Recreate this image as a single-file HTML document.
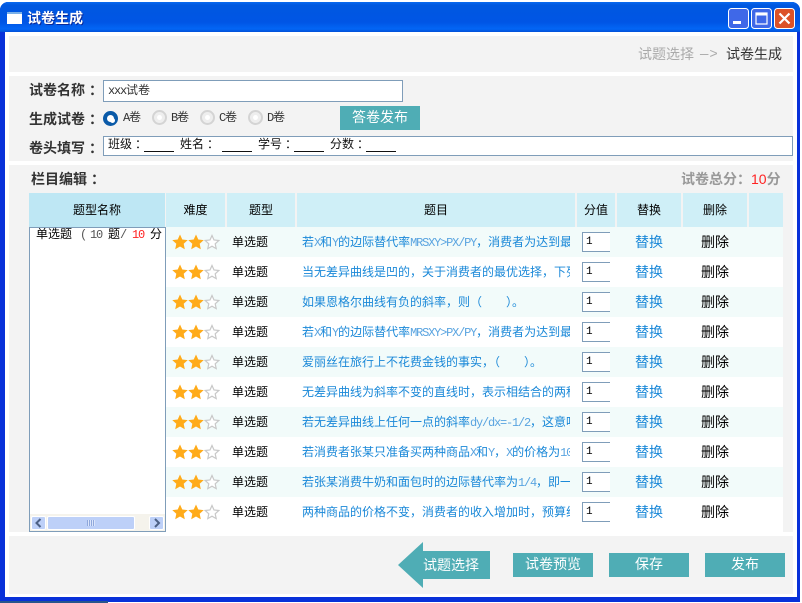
<!DOCTYPE html>
<html lang="zh"><head><meta charset="utf-8"><style>
html,body{margin:0;padding:0;background:#fff}
body{width:802px;height:603px;position:relative;overflow:hidden;font-family:"Liberation Mono","WenQuanYi Zen Hei","Noto Sans CJK SC",monospace;font-size:12px;color:#000}
.a{position:absolute;white-space:nowrap}
.p{position:absolute;background:#f3f3f3}
.in{position:absolute;background:#fff;border:1px solid #7f9db9;box-sizing:border-box}
.in span{position:absolute;top:0;white-space:nowrap}
.in i{position:absolute;top:14px;height:1px;background:#111}
.lb{position:absolute;left:29px;font-size:14px;font-weight:bold;color:#333;line-height:20px;white-space:nowrap;font-family:"WenQuanYi Zen Hei","Noto Sans CJK SC",sans-serif}
.lb s{text-decoration:none;position:relative;left:4px}
.btn{position:absolute;background:#4fadb5;color:#fff;font-size:14px;text-align:center;line-height:27px;height:24px;width:80px;overflow:hidden}
.h{position:absolute;top:193px;height:34px;line-height:36px;background:#cfeff7;text-align:center}
.r{position:absolute;left:166px;width:617px;height:30px}
.r.o{background:#f2fbfa}
.r>*{position:absolute}
.st{left:6px;top:7px}
.ty{left:66px;top:0;line-height:32px}
.q{left:136px;top:0;width:268px;overflow:hidden;white-space:nowrap;line-height:33px;color:#1a88d8}
.q b{font-weight:normal;color:#5aa4e0;letter-spacing:-1.2px}
.n{left:416px;top:5px;width:28px;height:20px;box-sizing:border-box;border:1px solid #7f9db9;border-right:0;background:#fff;line-height:19px;padding-left:3px;font-size:11px}
.rp{left:469px;top:0;font-size:14px;line-height:35px;color:#1a88d8}
.dl{left:535px;top:0;font-size:14px;line-height:35px}
.rd{position:absolute;top:110px;width:15px;height:15px;border-radius:50%;box-sizing:border-box;border:2px solid #d4d4d4;background:#eee}
.rd:after{content:"";position:absolute;left:3px;top:3px;width:5px;height:5px;border-radius:50%;background:#fff;border:0}
.rl{position:absolute;top:110px;line-height:17px;color:#333;letter-spacing:-1.2px}
</style></head><body>
<svg width="0" height="0" style="position:absolute"><defs>
<symbol id="s" viewBox="0 0 48 16">
<path d="M8 0.5l2.3 5 5.4.6-4 3.7 1.1 5.4L8 12.5l-4.8 2.7 1.1-5.4-4-3.7 5.4-.6z" fill="#ffab19"/>
<path d="M24 0.5l2.3 5 5.4.6-4 3.7 1.1 5.4-4.8-2.7-4.8 2.7 1.1-5.4-4-3.7 5.4-.6z" fill="#ffab19"/>
<path d="M40 1.5l2 4.5 4.8.5-3.6 3.3 1 4.8-4.2-2.4-4.2 2.4 1-4.8-3.6-3.3 4.8-.5z" fill="#fff" stroke="#c8c8c8" stroke-width="1.2"/>
</symbol></defs></svg>

<div class="a" style="left:0;top:2px;width:800px;height:600px;border-radius:8px 8px 0 0;background:#0831d9"></div>
<div class="a" style="left:0;top:2px;width:800px;height:30px;border-radius:8px 8px 0 0;background:linear-gradient(#0a6af0 0,#0058e0 3px,#0055e5 20px,#0266f5 27px,#0250d8 30px)"></div>
<div class="a" style="left:5px;top:32px;width:792px;height:565px;background:#fff"></div>
<div class="a" style="left:0;top:601px;width:108px;height:2px;background:#28558c"></div>

<div class="a" style="left:7px;top:12px;width:15px;height:12px;background:#fff;border-top:2px solid #7ab0e8;box-sizing:border-box"></div>
<div class="a" style="left:27px;top:9px;color:#fff;font-size:14px;font-weight:bold;line-height:18px;text-shadow:1px 1px 0 #0a2a9a;font-family:'WenQuanYi Zen Hei','Noto Sans CJK SC',sans-serif">试卷生成</div>
<svg class="a" style="left:728px;top:8px" width="68" height="22" viewBox="0 0 68 22">
<rect x=".5" y=".5" width="20" height="20" rx="3" fill="#3f68e8" stroke="#fff"/>
<rect x="5" y="13" width="8" height="3" fill="#fff"/>
<rect x="23.5" y=".5" width="20" height="20" rx="3" fill="#3f68e8" stroke="#fff"/>
<rect x="28" y="5" width="11" height="11" fill="none" stroke="#fff" stroke-width="1.2"/><rect x="28" y="5" width="11" height="2.5" fill="#fff"/>
<rect x="46.5" y=".5" width="20" height="20" rx="3" fill="#dc5228" stroke="#fff"/>
<path d="M51.5 5.5l10 10M61.5 5.5l-10 10" stroke="#fff" stroke-width="2.2"/>
</svg>

<div class="p" style="left:9px;top:36px;width:784px;height:36px"></div>
<div class="a" style="left:638px;top:47px;font-size:14px;line-height:18px;color:#aaa">试题选择</div>
<div class="a" style="left:700px;top:46px;font-size:14px;line-height:18px;color:#aaa;letter-spacing:1px">—&gt;</div>
<div class="a" style="left:726px;top:47px;font-size:14px;line-height:18px;color:#333">试卷生成</div>

<div class="p" style="left:9px;top:76px;width:784px;height:85px"></div>
<div class="lb" style="top:80px">试卷名称<s>：</s></div>
<div class="in" style="left:103px;top:80px;width:300px;height:22px;line-height:20px;color:#333"><span style="left:4px"><span style="position:static;letter-spacing:-1.2px">xxx</span>试卷</span></div>
<div class="lb" style="top:109px">生成试卷<s>：</s></div>
<div class="rd" style="left:103px;border:4px solid #0a5aa8;background:#fff;top:111px"></div>
<div class="rl" style="left:123px">A卷</div>
<div class="rd" style="left:152px"></div><div class="rl" style="left:171px">B卷</div>
<div class="rd" style="left:200px"></div><div class="rl" style="left:219px">C卷</div>
<div class="rd" style="left:248px"></div><div class="rl" style="left:267px">D卷</div>
<div class="btn" style="left:340px;top:106px">答卷发布</div>
<div class="lb" style="top:138px">卷头填写<s>：</s></div>
<div class="in" style="left:103px;top:136px;width:690px;height:20px;line-height:15px;color:#111">
<span style="left:4px;top:1px">班级</span><span style="left:31px;top:1px">：</span><i style="left:40px;width:30px"></i>
<span style="left:76px;top:1px">姓名</span><span style="left:103px;top:1px">：</span><i style="left:118px;width:30px"></i>
<span style="left:154px;top:1px">学号</span><span style="left:181px;top:1px">：</span><i style="left:190px;width:30px"></i>
<span style="left:226px;top:1px">分数</span><span style="left:253px;top:1px">：</span><i style="left:262px;width:30px"></i>
</div>

<div class="p" style="left:9px;top:165px;width:784px;height:367px"></div>
<div class="lb" style="left:31px;top:169px">栏目编辑<s>：</s></div>
<div class="a" style="left:681px;top:170px;font-size:14px;line-height:18px;color:#999;font-weight:bold;font-family:'WenQuanYi Zen Hei','Noto Sans CJK SC',sans-serif">试卷总分：<span style="color:#f22;font-weight:normal;font-family:'Liberation Sans'">10</span>分</div>

<div class="h" style="left:29px;width:136px;background:#bee7f4">题型名称</div>
<div class="h" style="left:166px;width:59px">难度</div>
<div class="h" style="left:227px;width:68px">题型</div>
<div class="h" style="left:297px;width:278px">题目</div>
<div class="h" style="left:577px;width:38px">分值</div>
<div class="h" style="left:617px;width:64px">替换</div>
<div class="h" style="left:683px;width:64px">删除</div>
<div class="h" style="left:749px;width:34px"></div>

<div class="in" style="left:29px;top:227px;width:137px;height:305px"></div>
<div class="a" style="left:36px;top:228px;line-height:15px">单选题</div>
<div class="a" style="left:80px;top:228px;line-height:15px;color:#555">(</div>
<div class="a" style="left:90px;top:228px;line-height:15px;color:#555;letter-spacing:-1.2px">10</div>
<div class="a" style="left:108px;top:228px;line-height:15px">题</div>
<div class="a" style="left:120px;top:228px;line-height:15px;color:#555">/</div>
<div class="a" style="left:132px;top:228px;line-height:15px;color:#f22;letter-spacing:-1.2px">10</div>
<div class="a" style="left:150px;top:228px;line-height:15px">分</div>
<div class="a" style="left:30px;top:514px;width:135px;height:17px;background:#f5f3ec"></div>
<div class="a" style="left:31px;top:516px;width:15px;height:14px;background:#bdd0f8;border:1px solid #fff;border-radius:2px;box-sizing:border-box"></div>
<svg class="a" style="left:34px;top:518px" width="10" height="10"><path d="M6.5 1L2.5 5l4 4" fill="none" stroke="#4d6185" stroke-width="2"/></svg>
<div class="a" style="left:47px;top:516px;width:88px;height:14px;background:#bdd0f8;border:1px solid #fff;border-radius:2px;box-sizing:border-box"></div>
<div class="a" style="left:87px;top:520px;width:8px;height:6px;background:repeating-linear-gradient(90deg,#8fa8dc 0 1px,#dbe5fb 1px 2px)"></div>
<div class="a" style="left:149px;top:516px;width:15px;height:14px;background:#bdd0f8;border:1px solid #fff;border-radius:2px;box-sizing:border-box"></div>
<svg class="a" style="left:152px;top:518px" width="10" height="10"><path d="M3 1l4 4-4 4" fill="none" stroke="#4d6185" stroke-width="2"/></svg>

<div class="a" style="left:166px;top:227px;width:617px;height:309px;background:#fff"></div>
<div class="r o" style="top:227px"><svg class="st" width="48" height="16"><use href="#s"/></svg><span class="ty">单选题</span><div class="q">若<b>X</b>和<b>Y</b>的边际替代率<b>MRSXY&gt;PX/PY</b>，消费者为达到最大效用</div><div class="n">1</div><span class="rp">替换</span><span class="dl">删除</span></div>
<div class="r" style="top:257px"><svg class="st" width="48" height="16"><use href="#s"/></svg><span class="ty">单选题</span><div class="q">当无差异曲线是凹的，关于消费者的最优选择，下列说法</div><div class="n">1</div><span class="rp">替换</span><span class="dl">删除</span></div>
<div class="r o" style="top:287px"><svg class="st" width="48" height="16"><use href="#s"/></svg><span class="ty">单选题</span><div class="q">如果恩格尔曲线有负的斜率，则（<span style="display:inline-block;width:24px"></span>）。</div><div class="n">1</div><span class="rp">替换</span><span class="dl">删除</span></div>
<div class="r" style="top:317px"><svg class="st" width="48" height="16"><use href="#s"/></svg><span class="ty">单选题</span><div class="q">若<b>X</b>和<b>Y</b>的边际替代率<b>MRSXY&gt;PX/PY</b>，消费者为达到最大效用</div><div class="n">1</div><span class="rp">替换</span><span class="dl">删除</span></div>
<div class="r o" style="top:347px"><svg class="st" width="48" height="16"><use href="#s"/></svg><span class="ty">单选题</span><div class="q">爱丽丝在旅行上不花费金钱的事实，（<span style="display:inline-block;width:24px"></span>）。</div><div class="n">1</div><span class="rp">替换</span><span class="dl">删除</span></div>
<div class="r" style="top:377px"><svg class="st" width="48" height="16"><use href="#s"/></svg><span class="ty">单选题</span><div class="q">无差异曲线为斜率不变的直线时，表示相结合的两种商品</div><div class="n">1</div><span class="rp">替换</span><span class="dl">删除</span></div>
<div class="r o" style="top:407px"><svg class="st" width="48" height="16"><use href="#s"/></svg><span class="ty">单选题</span><div class="q">若无差异曲线上任何一点的斜率<b>dy/dx=-1/2</b>，这意味着</div><div class="n">1</div><span class="rp">替换</span><span class="dl">删除</span></div>
<div class="r" style="top:437px"><svg class="st" width="48" height="16"><use href="#s"/></svg><span class="ty">单选题</span><div class="q">若消费者张某只准备买两种商品<b>X</b>和<b>Y</b>，<b>X</b>的价格为<b>10</b>元</div><div class="n">1</div><span class="rp">替换</span><span class="dl">删除</span></div>
<div class="r o" style="top:467px"><svg class="st" width="48" height="16"><use href="#s"/></svg><span class="ty">单选题</span><div class="q">若张某消费牛奶和面包时的边际替代率为<b>1/4</b>，即一单位</div><div class="n">1</div><span class="rp">替换</span><span class="dl">删除</span></div>
<div class="r" style="top:497px"><svg class="st" width="48" height="16"><use href="#s"/></svg><span class="ty">单选题</span><div class="q">两种商品的价格不变，消费者的收入增加时，预算线向右</div><div class="n">1</div><span class="rp">替换</span><span class="dl">删除</span></div>

<div class="p" style="left:9px;top:536px;width:784px;height:58px"></div>
<svg class="a" style="left:398px;top:542px" width="92" height="46"><path d="M0 23L25 0V9H92V37H25V46Z" fill="#4fadb5"/></svg>
<div class="a" style="left:423px;top:558px;font-size:14px;line-height:18px;color:#fff">试题选择</div>
<div class="btn" style="left:513px;top:553px">试卷预览</div>
<div class="btn" style="left:609px;top:553px">保存</div>
<div class="btn" style="left:705px;top:553px">发布</div>
</body></html>
